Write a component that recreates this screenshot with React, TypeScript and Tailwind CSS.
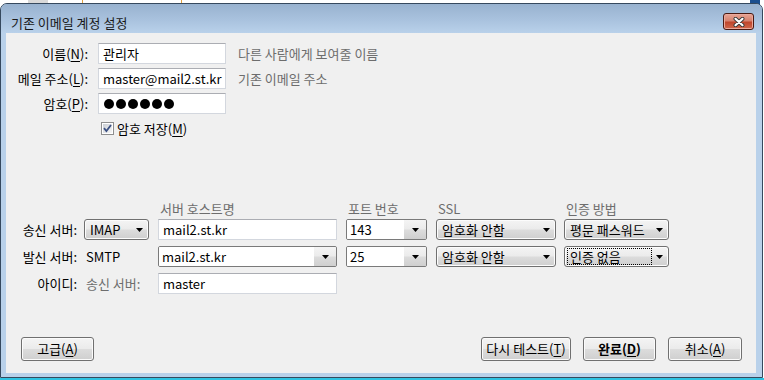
import React from 'react'

const btnBg =
  'bg-[linear-gradient(180deg,#f4f4f4_0%,#ebebeb_48%,#dcdcdc_52%,#cfcfcf_100%)]'

function U({ children }: { children: React.ReactNode }) {
  return <span className="underline underline-offset-[2px]">{children}</span>
}

function Arrow() {
  return (
    <svg width="7" height="4" viewBox="0 0 7 4" className="shrink-0">
      <polygon points="0,0 7,0 3.5,4" fill="#000" />
    </svg>
  )
}

function TextBox({ w, children }: { w: string; children?: React.ReactNode }) {
  return (
    <div
      className={`${w} h-[21px] shrink-0 bg-white border border-[#d3d7de] border-t-[#abadb3] flex items-center pl-[4px]`}
    >
      {children}
    </div>
  )
}

// drop-down list (not editable) – button look
function DropList({ w, text, focus }: { w: string; text: string; focus?: boolean }) {
  return (
    <div
      className={`${w} h-[21px] shrink-0 border border-[#707070] rounded-[3px] ${btnBg} shadow-[inset_0_0_0_1px_#fcfcfc] flex items-center pl-[2px] pr-[5px] gap-[4px]`}
    >
      <div
        className={`flex-1 h-[17px] flex items-center pl-[2px] ${focus ? 'border border-dotted border-black' : 'border border-transparent'}`}
      >
        {text}
      </div>
      <Arrow />
    </div>
  )
}

// editable combo box – white field with arrow button
function ComboEdit({ w, text }: { w: string; text: string }) {
  return (
    <div
      className={`${w} h-[21px] shrink-0 border border-[#7a7a7a] rounded-[2px] overflow-hidden flex`}
    >
      <div className="flex-1 bg-white flex items-center pl-[3px]">{text}</div>
      <div className={`w-[22px] ${btnBg} flex items-center justify-center`}>
        <Arrow />
      </div>
    </div>
  )
}

function Button({
  w,
  children,
  bold,
}: {
  w: string
  children: React.ReactNode
  bold?: boolean
}) {
  return (
    <div
      className={`${w} h-[24px] shrink-0 border border-[#707070] rounded-[3px] ${btnBg} shadow-[inset_0_0_0_1px_#fbfbfb] flex items-center justify-center ${bold ? 'font-bold' : ''}`}
    >
      {children}
    </div>
  )
}

function CheckBox() {
  return (
    <svg width="13" height="13" viewBox="0 0 13 13" className="shrink-0">
      <defs>
        <linearGradient id="cb" x1="0" y1="0" x2="1" y2="1">
          <stop offset="0" stopColor="#cbcfd5" />
          <stop offset="1" stopColor="#f6f6f6" />
        </linearGradient>
      </defs>
      <rect x="0.5" y="0.5" width="12" height="12" fill="#fff" stroke="#8e8f8f" />
      <rect x="2" y="2" width="9" height="9" fill="url(#cb)" />
      <path d="M3 6.2 L5.4 9 L10 3" fill="none" stroke="#3c5183" strokeWidth="1.8" />
    </svg>
  )
}

export default function App() {
  return (
    <div className="w-[764px] h-[380px] overflow-hidden bg-white flex flex-col relative font-['Noto_Sans_CJK_KR',sans-serif] text-[13px] leading-[16px] text-black">
      {/* desktop behind the dialog */}
      <div className="absolute right-[4px] top-0 w-[10px] h-[12px] bg-[#1b4f8f]" />
      <div className="h-[3px] shrink-0 flex items-start">
        <div className="ml-[28px] w-[20px] h-[3px] bg-[#d9d9d9]" />
        <div className="ml-[34px] w-[100px] h-[3px] border-x border-[#e0a040]" />
      </div>

      {/* dialog window */}
      <div className="relative w-[763px] h-[375px] shrink-0 border border-[#36495e] rounded-t-[7px] bg-[#b9d1ea] flex flex-col overflow-hidden">
        {/* title bar */}
        <div className="h-[29px] shrink-0 bg-[linear-gradient(180deg,#98b2cf_0%,#a9c2de_55%,#b9d1ea_100%)] flex items-start justify-between pl-[10px] pr-[8px]">
          <div className="mt-[11px] text-[#1a1a1a]">기존 이메일 계정 설정</div>
          <div className="mt-[9px] w-[31px] h-[17px] rounded-[3px] border border-[#4a1a12] bg-[linear-gradient(180deg,#e8a595_0%,#d6826f_45%,#c0462c_55%,#d0694d_100%)] shadow-[inset_0_0_0_1px_#eaa99c] flex items-center justify-center">
            <svg width="14" height="10" viewBox="0 0 14 10">
              <path d="M3.5 1.8 L10.5 8.2 M10.5 1.8 L3.5 8.2" stroke="#3a3a3a" strokeWidth="4" strokeLinecap="round" />
              <path d="M3.5 1.8 L10.5 8.2 M10.5 1.8 L3.5 8.2" stroke="#fff" strokeWidth="2.2" strokeLinecap="round" />
            </svg>
          </div>
        </div>

        {/* frame + client area */}
        <div className="flex-1 flex pl-[5px] pr-[6px] pb-[4px]">
          <div className="flex-1 bg-[#f0f0f0] flex flex-col pt-[10px]">
            {/* account */}
            <div className="flex flex-col gap-[4px]">
              <div className="flex items-center h-[21px]">
                <div className="w-[82px] text-right">
                  이름(<U>N</U>):
                </div>
                <div className="ml-[10px]">
                  <TextBox w="w-[128px]">관리자</TextBox>
                </div>
                <div className="ml-[12px] text-[#6d6d6d]">다른 사람에게 보여줄 이름</div>
              </div>
              <div className="flex items-center h-[21px]">
                <div className="w-[82px] text-right">
                  메일 주소(<U>L</U>):
                </div>
                <div className="ml-[10px]">
                  <TextBox w="w-[128px]">master@mail2.st.kr</TextBox>
                </div>
                <div className="ml-[12px] text-[#6d6d6d]">기존 이메일 주소</div>
              </div>
              <div className="flex items-center h-[21px]">
                <div className="w-[82px] text-right">
                  암호(<U>P</U>):
                </div>
                <div className="ml-[10px]">
                  <TextBox w="w-[128px]">
                    <div className="flex gap-[2px] pl-[1px]">
                      {[0, 1, 2, 3, 4, 5].map((i) => (
                        <span key={i} className="w-[10px] h-[10px] rounded-full bg-black" />
                      ))}
                    </div>
                  </TextBox>
                </div>
              </div>
            </div>
            <div className="mt-[7px] h-[15px] flex items-center ml-[95px] gap-[3px]">
              <CheckBox />
              <span>
                암호 저장(<U>M</U>)
              </span>
            </div>

            {/* servers */}
            <div className="mt-[65px] h-[16px] flex text-[#6d6d6d]">
              <div className="ml-[154px] w-[188px]">서버 호스트명</div>
              <div className="w-[90px]">포트 번호</div>
              <div className="w-[128px]">SSL</div>
              <div>인증 방법</div>
            </div>
            <div className="mt-[2px] flex flex-col gap-[6px]">
              <div className="flex items-center h-[21px] ml-[14px]">
                <div className="w-[57px] text-right">송신 서버:</div>
                <div className="ml-[7px]">
                  <DropList w="w-[65px]" text="IMAP" />
                </div>
                <div className="ml-[9px]">
                  <TextBox w="w-[179px]">mail2.st.kr</TextBox>
                </div>
                <div className="ml-[9px]">
                  <ComboEdit w="w-[81px]" text="143" />
                </div>
                <div className="ml-[9px]">
                  <DropList w="w-[120px]" text="암호화 안함" />
                </div>
                <div className="ml-[8px]">
                  <DropList w="w-[105px]" text="평문 패스워드" />
                </div>
              </div>
              <div className="flex items-center h-[21px] ml-[14px]">
                <div className="w-[57px] text-right">발신 서버:</div>
                <div className="ml-[7px] w-[65px] pl-[2px]">SMTP</div>
                <div className="ml-[9px]">
                  <ComboEdit w="w-[179px]" text="mail2.st.kr" />
                </div>
                <div className="ml-[9px]">
                  <ComboEdit w="w-[81px]" text="25" />
                </div>
                <div className="ml-[9px]">
                  <DropList w="w-[120px]" text="암호화 안함" />
                </div>
                <div className="ml-[8px]">
                  <DropList w="w-[105px]" text="인증 없음" focus />
                </div>
              </div>
              <div className="flex items-center h-[21px] ml-[14px]">
                <div className="w-[57px] text-right whitespace-nowrap">아이디:</div>
                <div className="ml-[7px] w-[65px] pl-[2px] text-[#6d6d6d] whitespace-nowrap">송신 서버:</div>
                <div className="ml-[9px]">
                  <TextBox w="w-[179px]">master</TextBox>
                </div>
              </div>
            </div>

            {/* buttons */}
            <div className="mt-auto mb-[12px] flex items-center pl-[15px] pr-[14px]">
              <Button w="w-[73px]">
                고급(<U>A</U>)
              </Button>
              <div className="flex-1" />
              <div className="flex gap-[12px]">
                <Button w="w-[90px]">
                  다시 테스트(<U>T</U>)
                </Button>
                <Button w="w-[73px]" bold>
                  완료(<U>D</U>)
                </Button>
                <Button w="w-[74px]">
                  취소(<U>A</U>)
                </Button>
              </div>
            </div>
          </div>
        </div>
      </div>
      <div className="flex-1 bg-[#2fc3e2]" />
    </div>
  )
}
